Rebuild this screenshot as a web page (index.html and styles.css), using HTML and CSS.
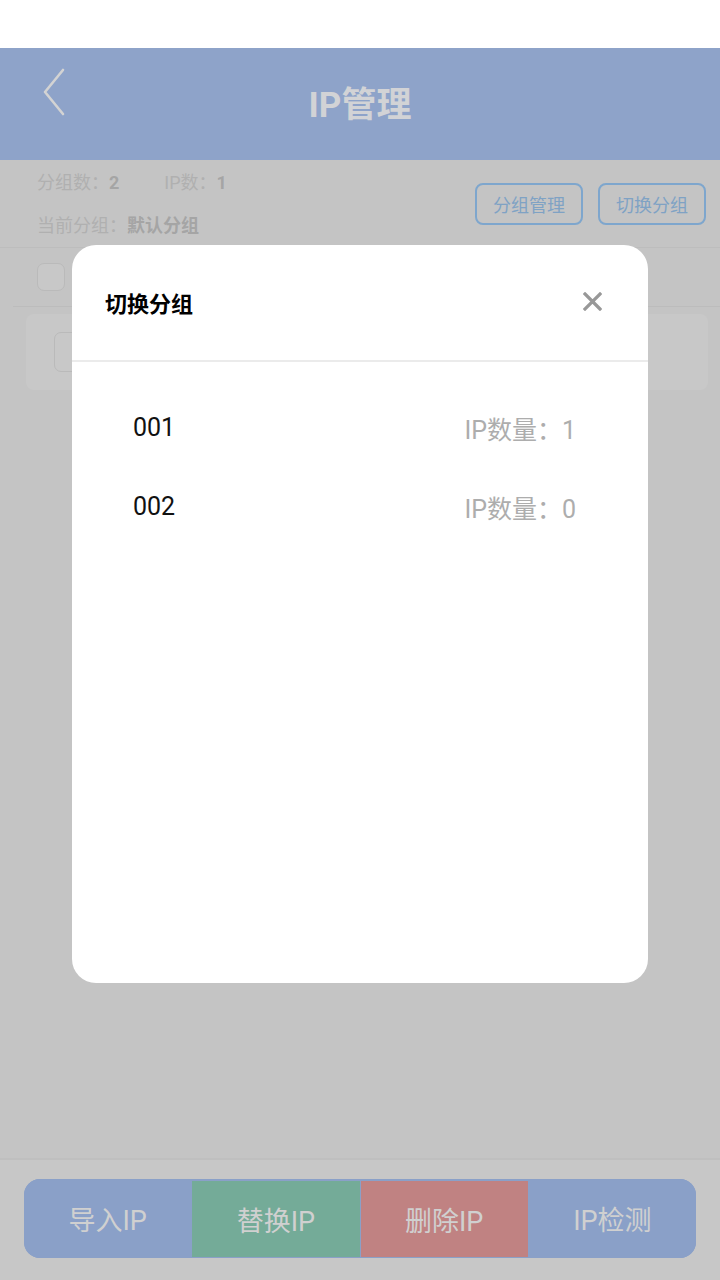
FILE: index.html
```html
<!DOCTYPE html>
<html lang="zh-CN">
<head>
<meta charset="utf-8">
<title>IP管理</title>
<link rel="stylesheet" href="styles.css">
</head>
<body>
<div class="page">
  <div class="status"></div>
  <header class="header">
    <div class="back">
      <svg width="24" height="50" viewBox="0 0 24 50"><polyline points="21,3 3,25 21,47" fill="none" stroke="#d3d3d3" stroke-width="2.6" stroke-linecap="round" stroke-linejoin="round"/></svg>
    </div>
    <h1 class="title">IP管理</h1>
    <div></div>
  </header>
  <section class="info">
    <div class="info-left">
      <div class="info-line"><span>分组数：<b>2</b></span><span class="ipcount">IP数：<b>1</b></span></div>
      <div class="info-line"><span>当前分组：<b>默认分组</b></span></div>
    </div>
    <div class="info-btns">
      <button class="outline-btn">分组管理</button>
      <button class="outline-btn">切换分组</button>
    </div>
  </section>
  <div class="select-row"><span class="checkbox"></span></div>
  <div class="card"><span class="checkbox big"></span></div>
  <div class="spacer"></div>
  <footer class="footer">
    <div class="bar">
      <div class="seg blue">导入IP</div>
      <div class="seg green">替换IP</div>
      <div class="seg red">删除IP</div>
      <div class="seg blue">IP检测</div>
    </div>
  </footer>

  <div class="mask"></div>
  <div class="modal">
    <div class="modal-head">
      <span class="modal-title">切换分组</span>
      <svg class="close" width="19" height="19" viewBox="0 0 19 19"><path d="M2 2 L17 17 M17 2 L2 17" stroke="#989898" stroke-width="3.2" stroke-linecap="square"/></svg>
    </div>
    <ul class="group-list">
      <li class="group"><span class="gname">001</span><span class="gcount">IP数量：1</span></li>
      <li class="group"><span class="gname">002</span><span class="gcount">IP数量：0</span></li>
    </ul>
  </div>
</div>
</body>
</html>
```

FILE: styles.css
```css
* { box-sizing: border-box; }
html, body { margin: 0; padding: 0; }
body {
  width: 720px;
  height: 1280px;
  overflow: hidden;
  font-family: Roboto, "Noto Sans CJK SC", sans-serif;
  background: #c4c4c4;
}
.page {
  position: relative;
  width: 720px;
  height: 1280px;
  display: flex;
  flex-direction: column;
}
.status { height: 48px; background: #ffffff; flex: none; }
.header {
  height: 112px;
  flex: none;
  background: #8ea3c9;
  display: grid;
  grid-template-columns: 1fr auto 1fr;
  align-items: center;
}
.back { padding-left: 42px; padding-bottom: 24px; display: flex; align-items: center; }
.title {
  margin: 0;
  font-size: 35px;
  font-weight: 700;
  color: #d2d3d6;
  padding-bottom: 6px;
}
.info {
  height: 88px;
  flex: none;
  display: flex;
  justify-content: space-between;
  padding: 0 14px 0 37px;
  border-bottom: 1px solid #bdbdbd;
}
.info-left { display: flex; flex-direction: column; padding-top: 10px; gap: 17px; }
.info-line { font-size: 18px; color: #b0b0b0; line-height: 26px; display: flex; }
.info-line b { font-weight: 700; color: #a5a5a5; }
.ipcount { margin-left: 45px; }
.info-btns { display: flex; gap: 15px; padding-top: 23px; }
.outline-btn {
  width: 108px;
  height: 42px;
  border: 2px solid #7ea6cd;
  border-radius: 8px;
  background: transparent;
  color: #7fa2c4;
  font-family: Roboto, "Noto Sans CJK SC", sans-serif;
  font-size: 18px;
  padding: 0;
}
.select-row {
  height: 59px;
  flex: none;
  margin-left: 13px;
  padding-left: 24px;
  display: flex;
  align-items: center;
  border-bottom: 1px solid #bcbcbc;
}
.checkbox {
  width: 28px;
  height: 28px;
  border: 1px solid #bababa;
  border-radius: 7px;
  background: #c8c8c8;
}
.card {
  margin: 7px 12px 0 26px;
  height: 76px;
  flex: none;
  background: #c8c8c8;
  border-radius: 8px;
  padding-left: 28px;
  display: flex;
  align-items: center;
}
.checkbox.big { width: 40px; height: 40px; }
.spacer { flex: 1; }
.footer {
  height: 122px;
  flex: none;
  border-top: 2px solid #bfbfbf;
  background: #c7c7c7;
  padding: 19px 24px 0 24px;
}
.bar {
  height: 79px;
  display: flex;
  border-radius: 16px;
  overflow: hidden;
  background: #8aa0c8;
  gap: 1px;
}
.seg {
  flex: 1;
  display: flex;
  align-items: center;
  justify-content: center;
  font-size: 27px;
  color: #d0d0d0;
}
.seg.blue { background: #8aa0c8; }
.seg.green { background: #74ab98; margin: 2px 0 1px; }
.seg.red { background: #c08282; margin: 2px 0 1px; }

.mask {
  position: absolute;
  left: 0; top: 48px; right: 0; bottom: 0;
  background: transparent;
}
.modal {
  position: absolute;
  left: 72px;
  top: 245px;
  width: 576px;
  height: 738px;
  background: #ffffff;
  border-radius: 24px;
  overflow: hidden;
}
.modal-head {
  height: 117px;
  display: flex;
  align-items: center;
  justify-content: space-between;
  padding: 0 46px 2px 33px;
  border-bottom: 2px solid #ebebeb;
}
.modal-title { font-size: 22px; font-weight: 700; color: #000; font-family: "Noto Sans CJK SC", sans-serif; }
.close { display: block; }
.group-list { list-style: none; margin: 0; padding: 26px 72px 0 61px; }
.group {
  height: 79px;
  display: flex;
  align-items: center;
  justify-content: space-between;
  font-size: 25px;
}
.gname { color: #111; }
.gcount { color: #adadad; }
```
